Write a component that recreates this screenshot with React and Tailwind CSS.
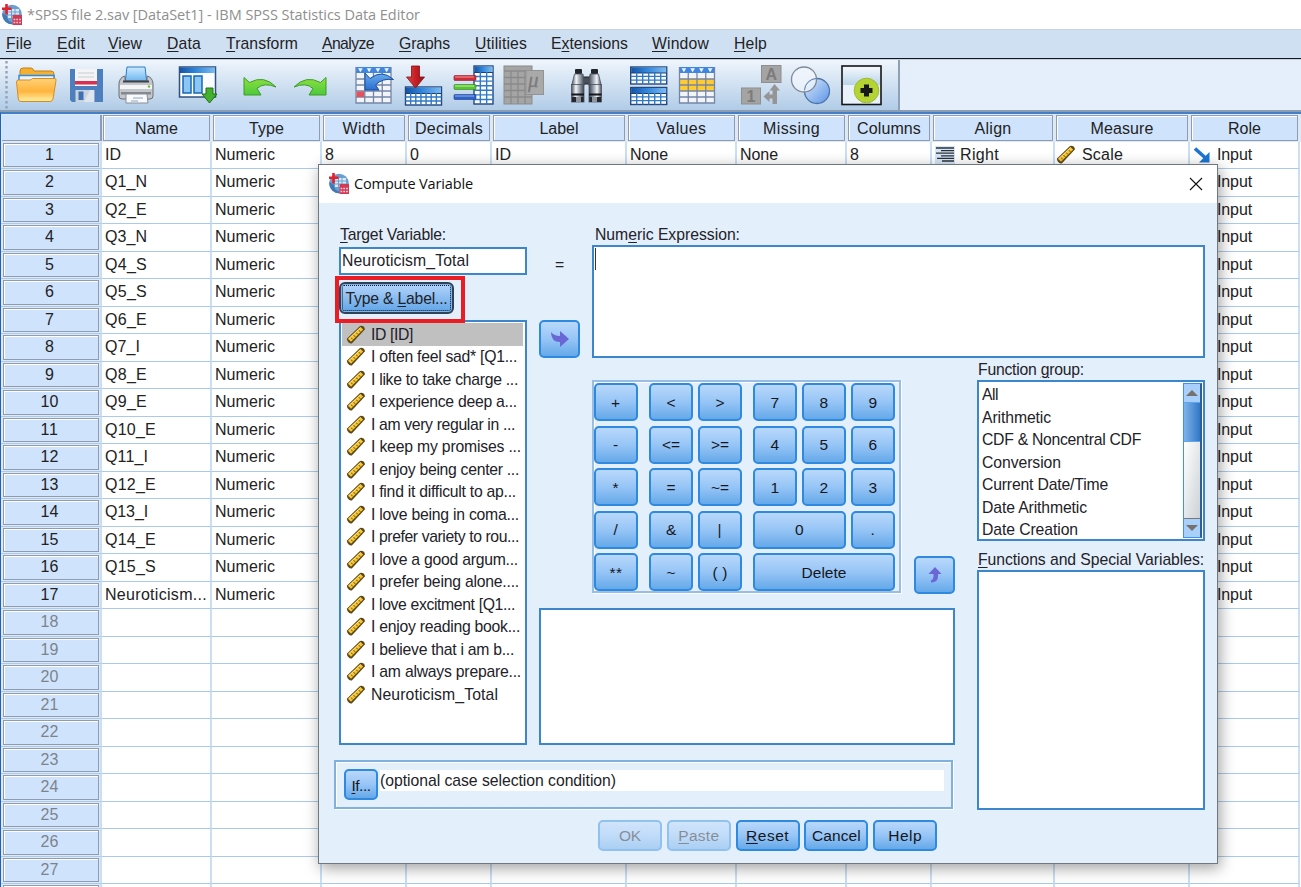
import React, { useLayoutEffect, useRef } from "react";

/* Text set to a given width by spreading the difference over its letters. "&" before a letter marks a mnemonic. */
function Fit({ t, w, className = "" }) {
  const ref = useRef(null);
  useLayoutEffect(() => {
    const el = ref.current;
    el.style.letterSpacing = "0px";
    const natural = el.getBoundingClientRect().width;
    el.style.letterSpacing = (w + 1 - natural) / el.textContent.length + "px";
  }, [t, w]);
  const m = t.match(/^(.*?)&([A-Za-z])(.*)$/);
  return (
    <span ref={ref} className={"inline-block whitespace-pre " + className}>
      {m ? (
        <>
          {m[1]}
          <span className="underline decoration-1 underline-offset-2">{m[2]}</span>
          {m[3]}
        </>
      ) : (
        t
      )}
    </span>
  );
}

function AppLogo() {
  return (
    <svg width="22" height="22" viewBox="0 0 22 22" className="shrink-0">
      <circle cx="11" cy="10.5" r="9.8" fill="#6b9fd0" />
      <path d="M8 19.8 A10 10 0 0 1 1.3 9 L6 12 Q6 17 11 18.500 L11 20.300Z" fill="#3f7ab6" />
      <path d="M7 5h11v9H7z" fill="#dbe8f5" />
      <path d="M7 8h12M7 11h12M10.500 5v9M14 5v9" stroke="#6b9fd0" strokeWidth="1" fill="none" />
      <path d="M5.500 0v10.500M1 4.800h9.500" stroke="#e3202c" strokeWidth="2.600" />
      <rect x="11.500" y="11" width="9.500" height="10" fill="#cf3a54" />
      <path d="M12.500 15.600h8M12.500 18.600h8" stroke="#f6c9d0" strokeWidth="1.500" strokeDasharray="1.800 1" />
    </svg>
  );
}

const Ruler = () => (
  <svg width="20" height="20" viewBox="0 0 20 20" className="shrink-0">
    <path d="M.8 13.800 L14 1 Q15.800 .2 17.600 1.600 Q19.200 3 18.800 4.600 L5.800 18.400 Q4.500 19 3 17.800 Q1 16 .8 13.800Z" fill="#5a4718" />
    <path d="M2 13.800 L14.500 2 L17.200 4.600 L5 16.800 Z" fill="#f8c531" />
    <path d="M5 12.500l1.600 1.800M7.600 10.100l1.600 1.800M10.200 7.600l1.600 1.800M12.800 5.100l1.600 1.800" stroke="#6b5414" strokeWidth="1" />
    <path d="M2.800 13.800 L14.500 2.800" stroke="#fde68a" strokeWidth=".8" />
  </svg>
);

function Tool({ x, w, className, children }) {
  return (
    <svg width={w} height="50" viewBox={`${x} 60 ${w} 50`} className={"shrink-0 " + className}>
      {children}
    </svg>
  );
}

function GridIcon({ x, y, w, h, head, cols, rows }) {
  const lines = [];
  for (let i = 1; i < cols; i++) lines.push(`M${x + (w * i) / cols} ${y + head}V${y + h}`);
  for (let i = 1; i < rows; i++) lines.push(`M${x} ${y + head + ((h - head) * i) / rows}H${x + w}`);
  return (
    <g>
      <rect x={x} y={y} width={w} height={h} fill="#fff" stroke="#26477c" strokeWidth="1.4" />
      <rect x={x + 0.5} y={y + 0.5} width={w - 1} height={head} fill="url(#blueHead)" />
      <path d={`M${x} ${y + head + 0.5}H${x + w}`} stroke="#1c3f78" strokeWidth="1" />
      <path d={lines.join("")} stroke="#2f7ac6" strokeWidth="1.4" />
    </g>
  );
}

function CaseGrid({ x, y, w, h }) {
  const c = w / 4;
  return (
    <g>
      <rect x={x} y={y} width={w} height={h} fill="#f2f4f8" />
      <rect x={x} y={y} width={w} height="6" fill="#3f86dc" />
      {[0, 1, 2, 3].map((i) => (
        <path key={i} d={`M${x + c * i + 2} ${y + 1.2}h${c - 4}l${-(c - 4) / 2} 4z`} fill="#eef5ff" />
      ))}
    </g>
  );
}

const CaseLines = ({ x, y, w, h }) => (
  <path
    d={`M${x + w / 4} ${y + 6}V${y + h}M${x + w / 2} ${y + 6}V${y + h}M${x + (w * 3) / 4} ${y + 6}V${y + h}` +
      [1, 2, 3, 4].map((i) => `M${x} ${y + 6 + (i * (h - 6)) / 5}H${x + w}`).join("") +
      `M${x} ${y}V${y + h}H${x + w}V${y}`}
    stroke="#7486a8"
    strokeWidth="1.3"
    fill="none"
  />
);

function Binocular({ x, flip }) {
  return (
    <g transform={flip ? `translate(${x} 0) scale(-1 1)` : `translate(${x} 0)`}>
      <rect x="4" y="69" width="7" height="5" rx="1" fill="#22252b" />
      <path d="M3.500 74h8.500l1.500 11H0.800z" fill="url(#steel)" stroke="#4b535f" strokeWidth=".8" />
      <rect x="0.500" y="84.500" width="12.500" height="17.500" fill="url(#steel)" stroke="#4b535f" strokeWidth=".8" />
      <rect x="0.500" y="93.500" width="12.500" height="2" fill="#15171c" />
      <rect x="1" y="97" width="11.500" height="5" fill="#24272d" />
      <rect x="5" y="97" width="5" height="5" fill="#8e939c" />
    </g>
  );
}

function Toolbar() {
  return (
    <div className="flex h-[50px] bg-linear-to-b from-[#eff5fc] to-[#b1cce7]">
      <Tool x={0} w={12} className="">
        <defs>
          <linearGradient id="blueHead"><stop stopColor="#1554a4" /><stop offset=".45" stopColor="#2f86da" /><stop offset="1" stopColor="#7dbcf2" /></linearGradient>
          <linearGradient id="steel"><stop stopColor="#4a515c" /><stop offset=".35" stopColor="#f3f5f8" /><stop offset=".65" stopColor="#98a1ae" /><stop offset="1" stopColor="#3b414b" /></linearGradient>
          <linearGradient id="folder" x2="0" y2="1"><stop stopColor="#ffd27a" /><stop offset=".55" stopColor="#ffb43c" /><stop offset="1" stopColor="#fff0a8" /></linearGradient>
          <linearGradient id="green" x2="0" y2="1"><stop stopColor="#8fe03e" /><stop offset="1" stopColor="#4cc93c" /></linearGradient>
          <linearGradient id="blueArrow" x2="0" y2="1"><stop stopColor="#6aaef0" /><stop offset="1" stopColor="#2a6ed0" /></linearGradient>
          <linearGradient id="red"><stop stopColor="#d84848" /><stop offset=".5" stopColor="#c81e24" /><stop offset="1" stopColor="#8f1418" /></linearGradient>
          <linearGradient id="ball" x2="1" y2="1"><stop stopColor="#dce9fb" /><stop offset="1" stopColor="#5a94e6" /></linearGradient>
          <linearGradient id="paper" x2="0" y2="1"><stop stopColor="#cfeaff" /><stop offset="1" stopColor="#58adf0" /></linearGradient>
          <linearGradient id="sky" x2="0" y2="1"><stop stopColor="#f4f8fc" /><stop offset="1" stopColor="#b9d4ea" /></linearGradient>
        </defs>
        <path d="M6.500 61V109" stroke="#96a5b8" strokeWidth="2.500" strokeDasharray="2.500 2.500" />
      </Tool>
      <Tool x={16} w={42} className="ml-1">
        <path d="M20 80V71q0-3 3-3h8q2 0 3 3h17q3 0 3 3v8z" fill="#f5b02f" stroke="#c77f18" />
        <path d="M19 75.500h35v6H19z" fill="#eaf4ff" stroke="#2d8be8" strokeWidth="1.500" />
        <path d="M16.500 82q0-2 2-2h11q2 0 3-1.500h22q2 0 1.500 2L53 99q-.5 2.500-3 2.500H21q-2.500 0-2.700-2.500z" fill="url(#folder)" stroke="#d88c22" />
      </Tool>
      <Tool x={68} w={36} className="ml-[10px]">
        <path d="M70 69h33v33H72l-2-2z" fill="#4d7fbe" />
        <rect x="75" y="69" width="22" height="17" fill="#f3f4f6" />
        <path d="M78 73h16M78 77h16" stroke="#c9ccd2" strokeWidth="1.200" />
        <rect x="75" y="81" width="22" height="3.500" fill="#d8304e" />
        <rect x="75.500" y="90" width="19" height="12" fill="#c9d3e0" />
        <rect x="78.500" y="91.500" width="5" height="8.500" fill="#3f6fae" />
        <path d="M84 102l6-12h4v12z" fill="#eef2f6" opacity=".6" />
      </Tool>
      <Tool x={116} w={40} className="ml-3">
        <path d="M125 84l2-17h18l2 17z" fill="url(#paper)" stroke="#2c7cc4" />
        <path d="M119 83q1-6 6-7v5h22v-5q5 1 6 7v13q0 3-3 3h-28q-3 0-3-3z" fill="#c3c6cb" stroke="#6c7077" />
        <path d="M120 85h32v4h-32z" fill="#f5f5f6" />
        <path d="M123 80.500h26v2h-26z" fill="#3e4147" />
        <rect x="121" y="92" width="30" height="2.500" fill="#85898f" />
        <path d="M126 94h21l1 9h-22z" fill="#f8fafc" stroke="#8a8e95" />
        <path d="M133 98h10M131 101h7" stroke="#8fa3bf" strokeWidth="1.200" />
        <circle cx="149" cy="86.500" r="1.200" fill="#6cbf3a" />
      </Tool>
      <Tool x={178} w={40} className="ml-[22px]">
        <rect x="179.500" y="67" width="36" height="30" fill="#fafcff" stroke="#31507e" strokeWidth="1.500" />
        <rect x="180" y="67.500" width="35" height="5.500" fill="url(#blueHead)" />
        <rect x="183" y="76" width="8" height="17" fill="#8cc6f5" stroke="#1767b5" strokeWidth="1.500" />
        <rect x="194" y="76" width="8" height="17" fill="#8cc6f5" stroke="#1767b5" strokeWidth="1.500" />
        <path d="M206 88h7v6h4l-7.500 9-7.500-9h4z" fill="#43b02e" stroke="#226f18" />
      </Tool>
      <Tool x={242} w={36} className="ml-6">
        <path d="M244 77.500L249.500 82.500Q264 74.500 276 87Q264 82 257 88.500L261 95H244Z" fill="url(#green)" stroke="#3a9c28" />
      </Tool>
      <Tool x={292} w={36} className="ml-[14px]">
        <path d="M326 77.500L320.500 82.500Q306 74.500 294 87Q306 82 313 88.500L309 95H326Z" fill="url(#green)" stroke="#3a9c28" />
      </Tool>
      <Tool x={354} w={42} className="ml-[26px]">
        <CaseGrid x={356} y={67} w={35} h={36} />
        <CaseLines x={356} y={67} w={35} h={36} />
        <rect x="356.500" y="91.500" width="7.500" height="5.500" fill="#e8505c" />
        <path d="M365 73L370 78.500Q382 69 393.500 79.500Q382 78 375.500 85L379 90H365Z" fill="url(#blueArrow)" stroke="#1c4f9c" />
      </Tool>
      <Tool x={404} w={40} className="ml-2">
        <GridIcon x={405.5} y={87} w={36} h={18} head={6} cols={7} rows={3} />
        <path d="M411.500 66h8v11h5l-9 11-9-11h5z" fill="url(#red)" stroke="#7e1216" strokeWidth=".8" />
      </Tool>
      <Tool x={453} w={42} className="ml-[9px]">
        <GridIcon x={474} y={66} w={19} h={38} head={6} cols={3} rows={7} />
        <rect x="454" y="75.500" width="22" height="5" rx="1" fill="#d02c36" stroke="#8b1f26" strokeWidth=".6" />
        <path d="M455 77h19" stroke="#f19aa0" />
        <rect x="454" y="84.500" width="22" height="5" rx="1" fill="#58c52e" stroke="#2f7f19" strokeWidth=".6" />
        <path d="M455 86h19" stroke="#baf39c" />
        <rect x="454" y="94.500" width="22" height="5" rx="1" fill="#2f62c8" stroke="#1d3f88" strokeWidth=".6" />
        <path d="M455 96h19" stroke="#90b4f0" />
      </Tool>
      <Tool x={503} w={42} className="ml-2">
        <rect x="504" y="66" width="28" height="38" fill="#a5a5a5" stroke="#8b8b8b" />
        <path d="M504 71h28M504 77.500h28M504 84h28M504 90.500h28M504 97h28M511 71v33M518 71v33M525 71v33" stroke="#8a8a8a" strokeWidth="1.300" />
        <rect x="526" y="70.500" width="17.500" height="24" fill="#a9a9a9" stroke="#939393" />
        <text x="528" y="87" fontSize="21" fontStyle="italic" fontFamily="Liberation Serif, serif" fill="#7a7c80" stroke="#7a7c80" strokeWidth=".3">μ</text>
      </Tool>
      <Tool x={570} w={34} className="ml-[25px]">
        <rect x="582" y="77" width="9" height="7" fill="#4a5058" stroke="#1e2126" />
        <Binocular x={571} />
        <Binocular x={602} flip />
      </Tool>
      <Tool x={629} w={40} className="ml-[25px]">
        <GridIcon x={630.7} y={67} w={36} h={17} head={5.5} cols={6} rows={3} />
        <GridIcon x={630.7} y={87.5} w={36} h={17} head={5.5} cols={6} rows={3} />
      </Tool>
      <Tool x={678} w={38} className="ml-[9px]">
        <CaseGrid x={679.5} y={67} w={35} h={36} />
        <rect x="680" y="79" width="34" height="12" fill="#ffcb2e" />
        <CaseLines x={679.5} y={67} w={35} h={36} />
      </Tool>
      <Tool x={740} w={42} className="ml-6">
        <rect x="761.500" y="65.500" width="19.500" height="17" fill="#a4a4a4" stroke="#8f8f8f" />
        <text x="765.500" y="80" fontSize="16" fontWeight="bold" fontFamily="Liberation Sans, sans-serif" fill="#7c7c7c">A</text>
        <rect x="741.500" y="88" width="19" height="16" fill="#a4a4a4" stroke="#8f8f8f" />
        <text x="746.500" y="102" fontSize="16" fontWeight="bold" fontFamily="Liberation Sans, sans-serif" fill="#7c7c7c">1</text>
        <path d="M774.500 84l5.500 6.500h-3V104h-4.500v-5.500h-3v3.500l-6-5.500 6-5.500v3.500h3V90.500h-3z" fill="#959595" />
      </Tool>
      <Tool x={790} w={42} className="ml-2">
        <circle cx="817" cy="91" r="12.500" fill="url(#ball)" stroke="#4b74a8" strokeWidth="1.300" />
        <circle cx="804" cy="79.500" r="12.500" fill="#f4f8fd" fillOpacity=".7" stroke="#7f8a98" strokeWidth="1.300" />
        <path d="M804.500 90a12.500 12.500 0 0 1 11.500-11.500" stroke="#6686b0" fill="none" />
      </Tool>
      <Tool x={840} w={44} className="ml-2">
        <rect x="842" y="66" width="39" height="38.500" fill="#e9f1fb" stroke="#14161a" strokeWidth="1.600" />
        <rect x="843" y="67" width="37" height="18" fill="url(#sky)" />
        <circle cx="866.500" cy="90.500" r="12.300" fill="#b6d334" stroke="#9cba32" />
        <path d="M866.500 84.500v12M860.500 90.500h12" stroke="#17181a" strokeWidth="5" />
      </Tool>
      <div className="ml-[14px] w-[2px] bg-[#8f9fb4]" />
      <div className="flex-1 bg-[#e5effb]" />
    </div>
  );
}

const menus = [
  ["&File", 25, "w-[51px]"], ["&Edit", 27, "w-[51px]"], ["&View", 33, "w-[59px]"], ["&Data", 33, "w-[59px]"],
  ["&Transform", 71, "w-[96px]"], ["&Analyze", 51, "w-[77px]"], ["&Graphs", 50, "w-[76px]"], ["&Utilities", 51, "w-[76px]"],
  ["E&xtensions", 76, "w-[101px]"], ["&Window", 56, "w-[82px]"], ["&Help", 32, "w-[60px]"],
];

const cols =
  "grid grid-cols-[101px_110px_110px_85px_85px_135px_110px_110px_85px_123px_135px_110px]";

const heads = [
  ["Name", 42], ["Type", 34], ["Width", 42], ["Decimals", 67], ["Label", 38], ["Values", 49], ["Missing", 56],
  ["Columns", 63], ["Align", 36], ["Measure", 62], ["Role", 32],
];

const rowNames = [
  ["ID", 15], ["Q1_N", 41], ["Q2_E", 41], ["Q3_N", 41], ["Q4_S", 41], ["Q5_S", 41], ["Q6_E", 41], ["Q7_I", 34],
  ["Q8_E", 41], ["Q9_E", 41], ["Q10_E", 50], ["Q11_I", 42], ["Q12_E", 50], ["Q13_I", 42], ["Q14_E", 50],
  ["Q15_S", 50], ["Neuroticism...", 101],
];

function Cell({ children, tight }) {
  return (
    <div
      className={
        "flex items-center overflow-hidden border-r-2 border-b border-r-[#c9dff5] border-b-[#abc9e8] " +
        (tight ? "pl-px" : "pl-[3px]")
      }
    >
      {children}
    </div>
  );
}

function DataRow({ n }) {
  const name = rowNames[n - 1];
  const first = n === 1;
  return (
    <div className={cols + " h-[27.5px] bg-white"}>
      <div className="border-r-2 border-b border-r-[#c9dff5] border-b-[#abc9e8] bg-[#dfe9f5] pt-px pr-px pb-px pl-[2px]">
        <div className={"flex h-full items-center justify-center border border-[#8d9bb3] bg-[#cfe3fc] pr-[3px] shadow-[inset_1px_1px_0_#fff] " + (name ? "text-[#222]" : "text-[#7d838c]")}>
          {n < 28 && <Fit t={String(n)} w={n < 10 ? 8 : 17} />}
        </div>
      </div>
      <Cell>{name && <Fit t={name[0]} w={name[1]} />}</Cell>
      <Cell>{name && <Fit t="Numeric" w={59} />}</Cell>
      <Cell>{first && "8"}</Cell>
      <Cell>{first && "0"}</Cell>
      <Cell>{first && <Fit t="ID" w={15} />}</Cell>
      <Cell>{first && <Fit t="None" w={37} />}</Cell>
      <Cell>{first && <Fit t="None" w={37} />}</Cell>
      <Cell>{first && "8"}</Cell>
      <Cell tight>
        {first && (
          <>
            <svg width="20" height="18" viewBox="0 0 20 18" className="mr-[5px] ml-[2px]">
              <rect width="20" height="18" fill="#d5e6f8" />
              <path d="M1 2h18M6 4.600h13M1 7.200h18M6 9.800h13M2 12.400h17M7 15h12" stroke="#2b3036" strokeWidth="1.300" />
            </svg>
            <Fit t="Right" w={38} />
          </>
        )}
      </Cell>
      <Cell tight>
        {first && (
          <>
            <Ruler />
            <Fit t="Scale" w={40} className="ml-[6px]" />
          </>
        )}
      </Cell>
      <Cell tight>
        {first && (
          <svg width="16" height="16" viewBox="0 0 16 16" className="mr-[-16px] ml-[3px]">
            <path d="M1 1.500L11 10.500" stroke="#1c74d4" strokeWidth="3.400" />
            <path d="M15.500 5v10.500H5z" fill="#1c74d4" />
          </svg>
        )}
        {name && <Fit t="Input" w={34} className={first ? "ml-[23px]" : "ml-[26px]"} />}
      </Cell>
    </div>
  );
}

const blueBtn =
  "flex items-center justify-center rounded-[5px] border-2 border-[#2d8ae0] bg-linear-to-b from-[#b9d8fb] via-[#96c5f6] to-[#65a9e9] text-[#16161c] text-[15.5px]";

function Key({ t, w, className = "" }) {
  return (
    <button className={blueBtn + " h-[38px] pt-px " + className}>
      <Fit t={t} w={w} />
    </button>
  );
}

const variables = [
  ["ID [ID]", 41], ["I often feel sad* [Q1...", 145], ["I like to take charge ...", 146], ["I experience deep a...", 145],
  ["I am very regular in ...", 143], ["I keep my promises ...", 149], ["I enjoy being center ...", 147],
  ["I find it difficult to ap...", 144], ["I love being in coma...", 147], ["I prefer variety to rou...", 147],
  ["I love a good argum...", 146], ["I prefer being alone....", 147], ["I love excitment [Q1...", 143],
  ["I enjoy reading book...", 148], ["I believe that i am b...", 142], ["I am always prepare...", 149],
  ["Neuroticism_Total", 126],
];

const groups = [
  ["All", 15], ["Arithmetic", 68], ["CDF & Noncentral CDF", 158], ["Conversion", 78], ["Current Date/Time", 125],
  ["Date Arithmetic", 104], ["Date Creation", 95],
];

const box = "border-2 border-[#3c86ce] bg-white";

function Dialog() {
  return (
    <div className="absolute top-[164px] left-[318px] flex h-[700px] w-[900px] flex-col border border-[#6f7780] bg-[#e4effc] text-[15.75px] text-[#222228] shadow-[2px_4px_14px_rgba(0,0,0,0.38)]">
      <div className="flex h-[38px] shrink-0 items-center bg-white pr-[14px] pl-[9px] text-[14.5px] text-[#111]">
        <AppLogo />
        <Fit t="Compute Variable" w={118} className="ml-[4px] font-['Open_Sans',sans-serif]" />
        <svg width="14" height="14" viewBox="0 0 14 14" className="ml-auto">
          <path d="M1 1L13 13M13 1L1 13" stroke="#111" strokeWidth="1.100" />
        </svg>
      </div>
      <div className="grid grid-cols-[188px_65px_363px_22px_228px] grid-rows-[155px_387px_65px_53px] pl-5 leading-5">
        {/* target variable and source list */}
        <div className="col-start-1 row-span-2 row-start-1 flex flex-col pt-[22px]">
          <Fit t="&Target Variable:" w={106} className="self-start pl-px" />
          <div className={box + " mt-[2px] flex h-[28px] items-center pl-[1px]"}>
            <Fit t="Neuroticism_Total" w={126} />
          </div>
          <div className="relative mt-[7px] h-8">
            <button className="h-8 w-[115px] rounded-[6px] border-2 border-[#2e4358] bg-linear-to-b from-[#b3d4fa] to-[#5fa4e6] p-px shadow-[inset_0_0_0_1px_#7fb5ea]">
              <span className="flex h-full items-center justify-center rounded-[2px] border border-dotted border-[#0a1a30] pt-px">
                <Fit t="Type & &Label..." w={101} />
              </span>
            </button>
            <div className="absolute top-[-6px] left-[-4px] z-10 h-[47px] w-[130px] border-4 border-[#ec1c24]" />
          </div>
          <div className={box + " mt-[6px] flex-1 pt-px pl-px"}>
            {variables.map(([t, w], i) => (
              <div key={t} className={"mr-[2px] flex h-[22.5px] items-center pt-[1px] pl-1 " + (i === 0 ? "bg-[#c0c0c0]" : "")}>
                <Ruler />
                <Fit t={t} w={w} className="ml-[5px]" />
              </div>
            ))}
          </div>
        </div>

        {/* equals sign and move arrow */}
        <div className="col-start-2 row-start-1 flex flex-col items-center px-3 pt-[52px]">
          <span>=</span>
          <button className={blueBtn + " mt-[45px] h-[38px] w-[41px]"}>
            <svg width="20" height="20" viewBox="0 0 20 20">
              <path d="M1 3 Q4 7 10 7 V2 L19 10 L10 18 V13 Q1 13 1 3Z" fill="#6a66d6" />
            </svg>
          </button>
        </div>

        {/* expression */}
        <div className="col-span-3 col-start-3 row-start-1 flex flex-col pt-[22px]">
          <Fit t="Num&eric Expression:" w={144} className="ml-[3px] self-start" />
          <div className={box + " flex-1"}>
            <div className="mt-px ml-px h-[22px] w-[1px] bg-[#333]" />
          </div>
        </div>

        {/* keypad and description */}
        <div className="col-span-2 col-start-2 row-start-2 flex flex-col pt-[22px] pl-3">
          <div className="flex h-[213px] items-end justify-between pl-[53px]">
            <div className="grid h-[213px] w-[309px] grid-cols-[44px_11px_44px_5px_44px_11px_44px_5px_44px_5px_44px] content-start gap-y-[4.5px] border-2 border-[#98bfe3] pt-px shadow-[inset_1px_1px_0_#fff,1px_1px_0_#fff]">
              <Key t="+" w={9} />
              <Key t="<" w={8} className="col-start-3" />
              <Key t=">" w={8} className="col-start-5" />
              <Key t="7" w={8} className="col-start-7" />
              <Key t="8" w={8} className="col-start-9" />
              <Key t="9" w={8} className="col-start-11" />
              <Key t="-" w={5} className="col-start-1" />
              <Key t="<=" w={17} className="col-start-3" />
              <Key t=">=" w={17} className="col-start-5" />
              <Key t="4" w={8} className="col-start-7" />
              <Key t="5" w={8} className="col-start-9" />
              <Key t="6" w={8} className="col-start-11" />
              <Key t="*" w={6} className="col-start-1" />
              <Key t="=" w={8} className="col-start-3" />
              <Key t="~=" w={17} className="col-start-5" />
              <Key t="1" w={8} className="col-start-7" />
              <Key t="2" w={8} className="col-start-9" />
              <Key t="3" w={8} className="col-start-11" />
              <Key t="/" w={4} className="col-start-1" />
              <Key t="&" w={9} className="col-start-3" />
              <Key t="|" w={4} className="col-start-5" />
              <Key t="0" w={8} className="col-span-3 col-start-7" />
              <Key t="." w={4} className="col-start-11" />
              <Key t="**" w={12} className="col-start-1" />
              <Key t="~" w={8} className="col-start-3" />
              <Key t="( )" w={14} className="col-start-5" />
              <Key t="Delete" w={44} className="col-span-5 col-start-7" />
            </div>
            <button className={blueBtn + " mb-[-1px] h-[38px] w-[41px]"}>
              <svg width="16" height="18" viewBox="0 0 16 18">
                <path d="M8 1 L14.500 8 H11 V10 Q11 16.500 4 16.500 L4 14.500 Q6.500 13.500 6.500 10 V8 H1.500Z" fill="#6a66d6" />
              </svg>
            </button>
          </div>
          <div className={box + " mt-[15px] flex-1"} />
        </div>

        {/* function lists */}
        <div className="col-start-5 row-span-2 row-start-2 flex flex-col pt-[2px]">
          <Fit t="Function &group:" w={105} className="ml-px self-start" />
          <div className={box + " flex h-[161px] justify-between overflow-hidden"}>
            <div className="pt-[2px] pl-[3px]">
              {groups.map(([t, w]) => (
                <div key={t} className="flex h-[22.5px] items-center">
                  <Fit t={t} w={w} />
                </div>
              ))}
            </div>
            <div className="m-px flex w-[19px] flex-col border border-r-2 border-[#3f93e6] border-r-[#2b5f9e]">
              <div className="flex h-[18px] items-center justify-center bg-[#a9d0fa]">
                <svg width="12" height="6" viewBox="0 0 12 6"><path d="M6 0L12 6H0z" fill="#77716d" /></svg>
              </div>
              <div className="h-10 border-y border-[#5aa6f2] bg-linear-to-r from-[#7db4ea] to-[#3277c4]" />
              <div className="flex-1 border-b border-[#777] bg-linear-to-br from-white to-[#cdd2d6]" />
              <div className="flex h-[18px] items-center justify-center bg-[#a9d0fa]">
                <svg width="12" height="6" viewBox="0 0 12 6"><path d="M0 0H12L6 6z" fill="#77716d" /></svg>
              </div>
            </div>
          </div>
          <Fit t="&Functions and Special Variables:" w={225} className="mt-[9px] ml-px self-start" />
          <div className={box + " flex-1"} />
        </div>

        {/* case selection */}
        <div className="col-span-3 col-start-1 row-start-3 mt-[15px] mr-[2px] mb-px ml-[-5px] flex border-2 border-[#80b0de] pt-[6px] pl-[8px] shadow-[inset_1px_1px_0_#fff,1px_1px_0_#fff]">
          <button className={blueBtn + " mt-px h-[31px] w-[34px] pt-[2px]"}>
            <Fit t="&If..." w={18} />
          </button>
          <div className="mt-[2px] ml-[2px] h-[21px] w-[564px] bg-white pt-px">
            <Fit t="(optional case selection condition)" w={235} />
          </div>
        </div>

        {/* actions */}
        <div className="col-span-5 col-start-1 row-start-4 flex gap-[4.8px] pt-[10px] pl-[259px]">
          <button className={blueBtn + " h-[31px] w-16 pt-px opacity-45"}><Fit t="OK" w={21} /></button>
          <button className={blueBtn + " h-[31px] w-16 pt-px opacity-45"}><Fit t="&Paste" w={40} /></button>
          <button className={blueBtn + " h-[31px] w-16 pt-px"}><Fit t="&Reset" w={42} /></button>
          <button className={blueBtn + " h-[31px] w-16 pt-px"}><Fit t="Cancel" w={48} /></button>
          <button className={blueBtn + " h-[31px] w-16 pt-px"}><Fit t="Help" w={33} /></button>
        </div>
      </div>
    </div>
  );
}

export default function App() {
  return (
    <div className="relative h-[887px] w-[1301px] overflow-hidden bg-white font-['Liberation_Sans',Arial,sans-serif] text-[16px] leading-5 text-[#222]">
      <div className="flex h-[29px] items-center pl-px text-[14.5px] text-[#8f8f8f]">
        <AppLogo />
        <Fit t="*SPSS file 2.sav [DataSet1] - IBM SPSS Statistics Data Editor" w={392} className="ml-[4px] font-['Open_Sans',sans-serif]" />
      </div>
      <div className="flex h-[29px] items-center border-t border-[#c3d1e3] bg-[#d0e0f3] pl-[6px] text-[15.75px]">
        {menus.map(([t, w, c]) => (
          <div key={t} className={"shrink-0 " + c}>
            <Fit t={t} w={w} />
          </div>
        ))}
      </div>
      <div className="h-[2px] border-b border-[#c3d1e3] bg-[#15171a]" />
      <Toolbar />
      <div className="h-[1.500px] bg-[#8d9db0]" />
      <div className="h-[777px] overflow-hidden border-t-2 border-l border-t-[#427fc6] border-l-[#1c62b8]">
        <div className={cols + " h-[28px] bg-[#dfe9f5]"}>
          <div className="mt-px mb-px ml-px border-r-2 border-b border-[#8d9bb3] bg-[#cfe3fc]" />
          {heads.map(([t, w]) => (
            <div key={t} className="pt-px pr-[2px] pb-px pl-px">
              <div className="flex h-full items-center justify-center border border-[#8d9bb3] bg-[#cfe3fc] pt-[2px] shadow-[inset_1px_1px_0_#fff]">
                <Fit t={t} w={w} />
              </div>
            </div>
          ))}
        </div>
        {Array.from({ length: 28 }, (_, i) => (
          <DataRow key={i} n={i + 1} />
        ))}
      </div>
      <Dialog />
    </div>
  );
}
